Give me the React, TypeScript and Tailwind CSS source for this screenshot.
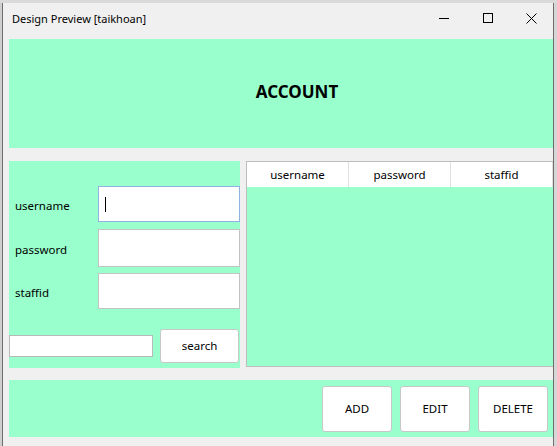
const font = { fontFamily: '"Noto Sans", "Open Sans", sans-serif' };

function Field({ label, height, focused = false }: { label: string; height: string; focused?: boolean }) {
  return (
    <div className={`flex items-center ${height}`}>
      <span className="flex-1 pl-[6px] pt-[3px] text-[11.5px] text-black">{label}</span>
      <div
        className={`w-[142px] h-full bg-white border flex items-center ${
          focused ? "border-[#8fb2e3]" : "border-[#c3c3c3]"
        }`}
      >
        {focused && <span className="ml-[6px] w-px h-[15px] bg-black" />}
      </div>
    </div>
  );
}

function ActionButton({ label }: { label: string }) {
  return (
    <button className="w-[70px] h-[46px] bg-white border border-[#c8c8c8] rounded-[3px] text-[11.5px] text-black">
      {label}
    </button>
  );
}

export default function App() {
  return (
    <div className="w-[557px] h-[446px] overflow-hidden flex flex-col bg-[#d6d6d6]" style={font}>
      {/* desktop strip behind the window */}
      <div className="h-[3px] shrink-0 bg-[#dadada]" />

      <div className="flex flex-1 min-h-0">
        <div className="w-[2px] bg-[#cfcfcf]" />
        <div className="w-[552px] flex flex-col bg-[#f0f0f0] border-l border-r border-[#6e6e6e] overflow-hidden">
          {/* Title bar */}
          <div className="h-[30px] shrink-0 flex items-center">
            <span className="pl-[9px] pt-[2px] text-[11px] text-black">Design Preview [taikhoan]</span>
            <div className="ml-auto flex h-full">
              <div className="w-[46px] flex items-center justify-center">
                <svg width="10" height="10" viewBox="0 0 10 10">
                  <path d="M0 5.5H10" stroke="#000" strokeWidth="1" />
                </svg>
              </div>
              <div className="w-[42px] flex items-center justify-center">
                <svg width="10" height="10" viewBox="0 0 10 10">
                  <rect x="0.5" y="0.5" width="9" height="9" fill="none" stroke="#000" strokeWidth="1" />
                </svg>
              </div>
              <div className="w-[44px] flex items-center justify-center">
                <svg width="11" height="11" viewBox="0 0 11 11">
                  <path d="M0.5 0.5L10.5 10.5M10.5 0.5L0.5 10.5" stroke="#000" strokeWidth="1" />
                </svg>
              </div>
            </div>
          </div>

          {/* Client area */}
          <div className="flex-1 flex flex-col pl-[6px] pt-[6px]">
            {/* Header */}
            <div className="h-[109px] shrink-0 bg-[#99ffcc] flex items-center justify-center pl-[32px] pb-[4px]">
              <h1 className="text-[17px] font-bold text-black">ACCOUNT</h1>
            </div>

            <div className="flex gap-[6px] mt-[13px] h-[207px] shrink-0">
              {/* Form panel */}
              <div className="w-[231px] shrink-0 bg-[#99ffcc] flex flex-col pt-[25px]">
                <Field label="username" height="h-[36px]" focused />
                <div className="mt-[7px]">
                  <Field label="password" height="h-[38px]" />
                </div>
                <div className="mt-[6px]">
                  <Field label="staffid" height="h-[36px]" />
                </div>
                <div className="mt-[20px] flex items-center h-[34px]">
                  <div className="w-[144px] h-[22px] bg-white border border-[#b8b8b8]" />
                  <button className="ml-[7px] w-[79px] h-[34px] bg-white border border-[#c8c8c8] rounded-[3px] text-[11.5px] text-black">
                    search
                  </button>
                </div>
              </div>

              {/* Table */}
              <div className="w-[310px] shrink-0 h-[206px] border border-[#bdbdbd] bg-[#99ffcc] flex flex-col">
                <div className="h-[25px] shrink-0 bg-white grid grid-cols-[102px_102px_102px] text-[11.5px] text-black">
                  <div className="flex items-center justify-center border-r border-[#e0e0e0]">username</div>
                  <div className="flex items-center justify-center border-r border-[#e0e0e0]">password</div>
                  <div className="flex items-center justify-center border-r border-[#e0e0e0]">staffid</div>
                </div>
              </div>
            </div>

            {/* Bottom bar */}
            <div className="mt-[12px] h-[57px] shrink-0 bg-[#99ffcc] flex items-start justify-end gap-[8px] pt-[6px] pr-[5px]">
              <ActionButton label="ADD" />
              <ActionButton label="EDIT" />
              <ActionButton label="DELETE" />
            </div>
          </div>
        </div>
      </div>
    </div>
  );
}
